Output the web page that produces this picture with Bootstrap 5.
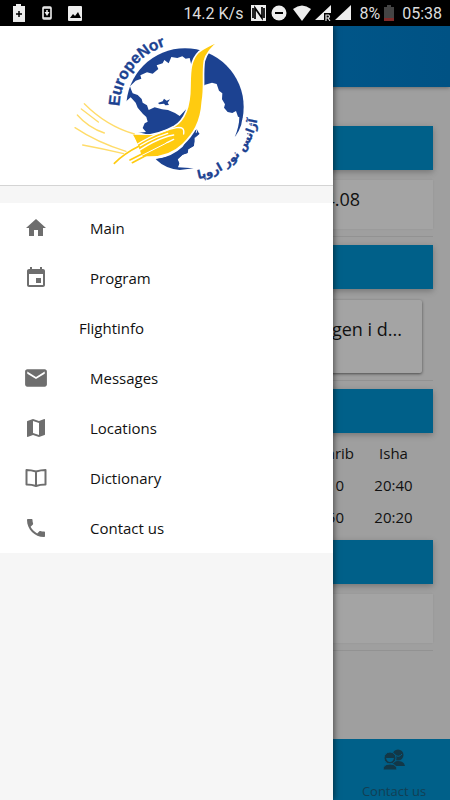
<!DOCTYPE html>
<html lang="en">
<head>
<meta charset="utf-8">
<meta name="viewport" content="width=device-width, initial-scale=1">
<title>EuropeNor</title>
<link href="https://cdn.jsdelivr.net/npm/bootstrap@5.3.0/dist/css/bootstrap.min.css" rel="stylesheet">
<style>
body{font-family:"Open Sans","Noto Sans",sans-serif;font-size:15px;line-height:20px;color:#111;background:#9f9f9f}
.status{height:26px;background:#000;color:#ddd;font:16px/26px Roboto,sans-serif}
.status svg{display:block}
.status .readout{padding-top:2px}
.topbar{height:61px;background:linear-gradient(90deg,#005f94,#005284);box-shadow:0 1px 4px #0005}
.feed{padding:39px 17px 0}
.banner{height:44px;background:#006089;box-shadow:0 2px 6px #0004}
.panel{background:#a4a4a4}
.panel-date{height:49px;margin:10px 0 7px;padding:9px 73px;font-size:18px;box-shadow:0 0 2px #0001}
.panel-news{height:73px;margin:11px 11px 7px 0;padding:19px 20px;font-size:18px;border-radius:2px;box-shadow:0 1px 3px #0008}
.rule{height:1px;margin-bottom:8px;background:#929292}
.times{table-layout:fixed;margin:5px 0 6px}
.times th,.times td{font-weight:400;text-align:center;padding:5px 0 7px}
.times .next-last{width:14%}
.times .last{width:19%}
.tabs{height:61px;background:#006089}
.tabs a{width:112px;color:#123f54;font-size:13px;padding-top:10px}
.tabs svg{margin-bottom:10px}
.drawer{width:74%;background:#f6f6f6;box-shadow:1px 0 6px #0008}
.brand{height:160px;border-bottom:1px solid #d4d4d4;background:#fff}
.menu{margin-top:17px;background:#fff}
.menu a{height:50px;padding:0 24px 1px;color:#111}
.menu svg{width:24px;height:24px;margin-right:42px;fill:#6e6e6e}
.menu .plain{padding-left:79px}
</style>
<script src="https://cdn.jsdelivr.net/npm/bootstrap@5.3.0/dist/js/bootstrap.bundle.min.js"></script>
</head>
<body>
<div class="d-flex flex-column vh-100 overflow-hidden">
  <header class="status d-flex align-items-center justify-content-between flex-shrink-0">
    <div class="d-flex align-items-center ps-2">
      <svg class="ms-1" width="14" height="18" viewBox="0 0 14 18"><path fill="#eee" d="M4 0h5v2h4v16H1V2h3z"/><path stroke="#000" stroke-width="1.5" d="M7 7v6M4 10h6"/></svg>
      <svg class="ms-3" width="10" height="14" viewBox="0 0 10 14"><rect x="1" y="1" width="8" height="12" rx="1" fill="none" stroke="#eee" stroke-width="1.6"/><path stroke="#eee" stroke-width="1.5" fill="none" d="M1 2h8M1 12h8M5 4v4"/><path fill="#eee" d="M2.500 6h5L5 10z"/></svg>
      <svg class="ms-3" width="14" height="15" viewBox="0 0 14 15"><rect width="14" height="15" rx="1" fill="#eee"/><path d="M2 12l3-4 2 2 3-4 3 6z"/></svg>
    </div>
    <div class="d-flex align-items-center pe-2 text-nowrap">
      <span class="readout">14.2 K/s</span>
      <svg class="ms-2" width="15" height="16" viewBox="0 0 15 16"><rect width="15" height="16" fill="#eee"/><path fill="none" stroke="#000" stroke-width="1.7" d="M4 14V3l7 10V2M2 3v10M13 3v10"/></svg>
      <svg class="ms-1" width="17" height="16" viewBox="0 0 17 16"><circle cx="9" cy="8" r="7.500" fill="#eee"/><path stroke="#000" stroke-width="2" d="M5 8h8"/></svg>
      <svg class="ms-1" width="20" height="16" viewBox="0 0 20 16"><path fill="#eee" d="M2 4q9-7 18 0l-9 12z"/></svg>
      <svg class="ms-1" width="16" height="16" viewBox="0 0 16 16"><path fill="#eee" d="M0 15L16 0v8H9v7z"/><path fill="none" stroke="#ddd" stroke-width="1.200" d="M11 16v-6h2.500q2 1.500 0 3H11m2 0l2 3"/></svg>
      <svg class="ms-1" width="16" height="16" viewBox="0 0 16 16"><path fill="#eee" d="M0 15L16 0v15z"/></svg>
      <span class="readout ms-2">8%</span>
      <svg class="ms-1 me-2" width="10" height="16" viewBox="0 0 10 16"><path fill="#444" d="M3 0h4v2h3v14H0V2h3z"/><path fill="#812b2a" d="M0 13h10v3H0z"/></svg>
      <span class="readout">05:38</span>
    </div>
  </header>

  <div class="position-relative d-flex flex-column flex-grow-1">
    <div class="topbar"></div>
    <main class="feed flex-grow-1">
      <div class="banner"></div>
      <div class="panel panel-date text-end">4.08</div>
      <div class="rule"></div>
      <div class="banner"></div>
      <div class="panel panel-news text-end">gen i d...</div>
      <div class="rule"></div>
      <div class="banner"></div>
      <table class="times w-100">
        <thead><tr><th></th><th></th><th></th><th scope="col" class="next-last">Maghrib</th><th scope="col" class="last">Isha</th></tr></thead>
        <tbody>
          <tr><td></td><td></td><td></td><td>19:10</td><td>20:40</td></tr>
          <tr><td></td><td></td><td></td><td>18:50</td><td>20:20</td></tr>
        </tbody>
      </table>
      <div class="banner"></div>
      <div class="panel panel-date"></div>
      <div class="rule"></div>
    </main>
    <footer class="tabs d-flex justify-content-end flex-shrink-0">
      <a href="#contact" class="d-flex flex-column align-items-center text-decoration-none text-nowrap">
        <svg width="24" height="22" viewBox="0 0 24 22" class="flex-shrink-0"><g fill="#123848"><circle cx="16" cy="6" r="5.500"/><path d="M10 17q0-5 6-5 6 0 7 5z"/></g><path fill="none" stroke="#006089" d="M13 6q4 3 7-1"/><g fill="#123848" stroke="#006089"><circle cx="8" cy="9" r="6"/><path d="M1 21q0-6 7-6t7 6z"/></g><path fill="#006089" d="M4 9h8q-1 4-4 4T4 9z"/></svg>
        Contact us
      </a>
    </footer>

    <nav class="drawer position-absolute top-0 start-0 h-100" aria-label="Main menu">
      <div class="brand d-flex justify-content-center">
        <svg width="210" height="158" viewBox="3 0 630 474" role="img" aria-label="EuropeNor">
          <defs>
            <path id="arcTop" d="M175 241A198 198 0 0 1 350 52"/>
            <path id="arcBottom" d="M412 459A222 222 0 0 0 592 262"/>
          </defs>
          <circle cx="372" cy="243" r="176" fill="#1c4291"/>
          <path fill="#fff" d="M207 181L224 164 241 158 238 148 258 139 275 143 292 129 287 118 305 112 310 102 323 112 331 93 349 96 364 91 374 98 386 96 393 125 397 190 385 240 356 270 342 261 321 252 303 250 281 244 263 252 258 238 245 230 242 219 230 207 215 202 210 190z"/>
          <path fill="#1c4291" d="M291 231l14-5 4-8 8 6 10-4-7 10 4 7-11 1-4-5-14 2z"/>
          <path fill="#fff" d="M430 177L453 170 467 174 474 194 484 202 483 220 492 235 489 245 500 258 514 261 525 255 531 272 544 276 545 294 535 315 525 332 550 355 520 430 350 432 354 414 350 400 365 386 379 381 381 370 398 360 402 335 415 324 407 308 402 315 399 295z"/>
          <path fill="#1c4291" d="M543 262q6 35-22 72 14-34 14-62z"/>
          <path fill="#fff" d="M180 240L209 214 224 230 230 245 246 264 256 273 260 287 251 292 245 306 255 318 190 325z"/>
          <path fill="#fff" d="M195 310l72 17 145-25-12 42-50 42-60 12-110-18z"/>
          <path fill="#1c4291" d="M407 310l-3 10 12 2-15 13-2 24-17 11-2 11-16 5-14 14 5 12-4 12 47 3-42 5q-42-3-72-32 50-8 81-38l25-42z"/>
          <path fill="#ffcb10" stroke="#fff" stroke-width="5" d="M476 45Q437 75 430 105C424 145 432 182 424 226 420 292 396 326 365 356 333 387 290 398 241 392L216 326Q278 336 340 301C378 278 387 229 387 181 388 144 386 104 413 78Q434 62 476 45z"/>
          <path fill="#ffcb10" d="M216 326l80 2-50 50z"/>
          <g fill="none" stroke="#fff" stroke-width="4" stroke-linecap="round"><path d="M177 390Q270 321 347 305 372 301 368 324"/><path d="M204 395Q281 337 338 327"/><path d="M211 403L338 340"/><path d="M200 384Q260 340 320 322"/></g>
          <g fill="none" stroke="#ffcb10" stroke-linecap="round"><path stroke-width="5" d="M160 412Q190 382 235 360M214 410L320 354M207 402L312 349"/><path stroke="#ffdc6a" stroke-width="4" d="M70 233Q135 299 220 324M49 267Q82 305 130 321M42 305Q109 350 195 376M65 357Q125 368 188 383M61 249L112 288"/></g>
          <text fill="#1c4291" stroke="#1c4291" stroke-width="1" font-family="Liberation Sans, sans-serif" font-weight="700" font-size="47"><textPath href="#arcTop">EuropeNor</textPath></text>
          <text fill="#1c4291" stroke="#1c4291" stroke-width="1" font-family="DejaVu Sans, sans-serif" font-weight="700" font-size="35"><textPath href="#arcBottom">آژانس نور اروپا</textPath></text>
        </svg>
      </div>
      <div class="menu">
        <a href="#main" class="d-flex align-items-center text-decoration-none"><svg viewBox="0 0 24 24"><path d="M10 20v-6h4v6h5v-8h3L12 3 2 12h3v8z"/></svg>Main</a>
        <a href="#program" class="d-flex align-items-center text-decoration-none"><svg viewBox="0 0 24 24"><path d="M17 12h-5v5h5zM16 1v2H8V1H6v2H5c-1.100 0-2 .9-2 2v14c0 1.100.9 2 2 2h14c1.100 0 2-.9 2-2V5c0-1.100-.9-2-2-2h-1V1zm3 18H5V8h14z"/></svg>Program</a>
        <a href="#flightinfo" class="plain d-flex align-items-center text-decoration-none">Flightinfo</a>
        <a href="#messages" class="d-flex align-items-center text-decoration-none"><svg viewBox="1 1 22 22"><path d="M20 4H4c-1.100 0-2 .9-2 2v12c0 1.100.9 2 2 2h16c1.100 0 2-.9 2-2V6c0-1.100-.9-2-2-2zm0 4l-8 5-8-5V6l8 5 8-5z"/></svg>Messages</a>
        <a href="#locations" class="d-flex align-items-center text-decoration-none"><svg viewBox="0 0 24 24"><path d="M20.500 3l-.2 0L15 5.100 9 3 3.400 4.900c-.2.100-.4.300-.4.500V20.500c0 .3.200.5.500.5L9 18.900l6 2.100 5.600-1.900c.2-.1.400-.3.400-.5V3.500c0-.3-.2-.5-.5-.5zM15 19l-6-2.100V5l6 2.100z"/></svg>Locations</a>
        <a href="#dictionary" class="d-flex align-items-center text-decoration-none"><svg viewBox="0 0 24 24"><path fill="none" stroke="#6e6e6e" stroke-width="2" stroke-linejoin="round" d="M12 5.500Q7 4 2.500 4v14.500Q8 18.500 12 20 16 18.500 21.500 18.500V4Q17 4 12 5.500zV20"/></svg>Dictionary</a>
        <a href="#contact" class="d-flex align-items-center text-decoration-none"><svg viewBox="0 0 24 24"><path d="M6.600 10.800c1.400 2.800 3.800 5.100 6.600 6.600l2.200-2.200c.3-.3.700-.4 1-.2 1.100.4 2.300.6 3.600.6.600 0 1 .4 1 1V20c0 .6-.4 1-1 1C10.600 21 3 13.400 3 4c0-.6.500-1 1-1h3.500c.6 0 1 .4 1 1 0 1.200.2 2.400.6 3.600.1.300 0 .7-.2 1z"/></svg>Contact us</a>
      </div>
    </nav>
  </div>
</div>
</body>
</html>
